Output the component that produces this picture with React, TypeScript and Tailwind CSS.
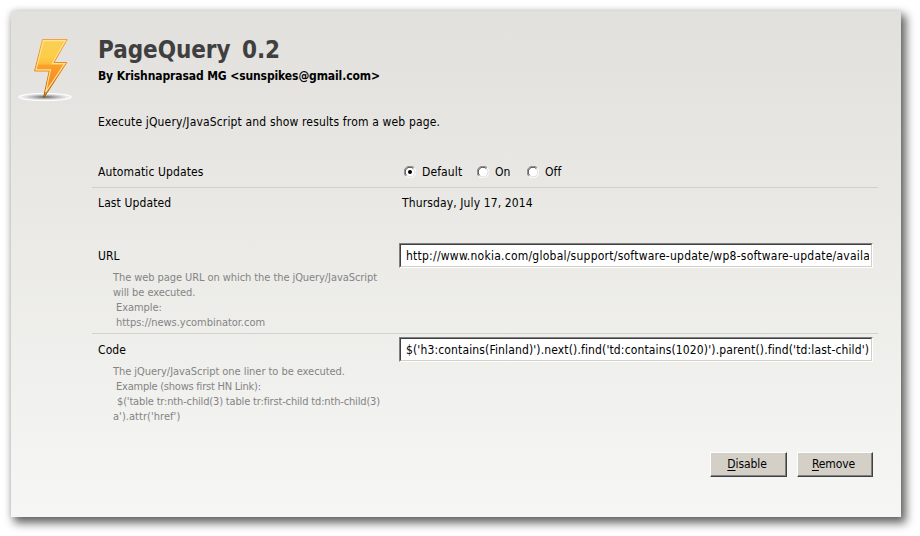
import type { ReactNode } from "react";

function Bolt() {
  return (
    <svg width="58" height="68" viewBox="0 0 58 68" className="block">
      <defs>
        <linearGradient id="bolt" x1="0" y1="0" x2="0" y2="1">
          <stop offset="0" stopColor="#f9cf58" />
          <stop offset="0.3" stopColor="#fdcd48" />
          <stop offset="0.42" stopColor="#fcbc3c" />
          <stop offset="0.44" stopColor="#f9a02c" />
          <stop offset="0.7" stopColor="#f78d25" />
          <stop offset="1" stopColor="#f7a32c" />
        </linearGradient>
        <linearGradient id="edge" x1="0" y1="0" x2="0" y2="1">
          <stop offset="0" stopColor="#f5a138" />
          <stop offset="0.6" stopColor="#e8801c" />
          <stop offset="1" stopColor="#8a5208" />
        </linearGradient>
        <radialGradient id="ground">
          <stop offset="0" stopColor="#606060" />
          <stop offset="0.35" stopColor="#a8a8a8" />
          <stop offset="0.7" stopColor="#dcdcdc" />
          <stop offset="1" stopColor="#fafafa" />
        </radialGradient>
      </defs>
      <ellipse cx="28" cy="62" rx="26.5" ry="3.6" fill="url(#ground)" stroke="#fff" strokeWidth="1" />
      <path d="M25.5 4.5H50.2L37 27.5H49.8L26.5 63L32.2 36H17.6Z" fill="url(#bolt)" stroke="url(#edge)" strokeWidth="1" strokeLinejoin="round" />
      <path d="M26.4 5.6H48.3L35.2 28.6H47.7L28.7 57L33.5 34.9H19Z" fill="none" stroke="#ffe391" strokeWidth="1.1" />
    </svg>
  );
}

function Radio({ label, checked, gap }: { label: string; checked?: boolean; gap: string }) {
  return (
    <label className={`flex items-center gap-[6px] ${gap}`}>
      <svg width="12" height="12" viewBox="0 0 12 12">
        <circle cx="6" cy="6" r="5" fill="#fff" />
        <path d="M1.8 10.2A5.5 5.5 0 0 1 10.2 1.8" fill="none" stroke="#808080" />
        <path d="M2.6 9.3A4.6 4.6 0 0 1 9.3 2.6" fill="none" stroke="#404040" />
        <path d="M10.2 1.8A5.6 5.6 0 0 1 1.8 10.2" fill="none" stroke="#fff" />
        <path d="M9.5 2.8A4.6 4.6 0 0 1 2.8 9.5" fill="none" stroke="#d8d5ce" strokeWidth="0.7" />
        {checked && <circle cx="6" cy="6" r="2" fill="#000" />}
      </svg>
      <span>{label}</span>
    </label>
  );
}

function Field({ children }: { children: ReactNode }) {
  return (
    <div className="h-[25px] w-[474px] border border-t-[#808080] border-r-white border-b-white border-l-[#808080]">
      <div className="h-full overflow-hidden border border-t-[#404040] border-r-[#d4d0c8] border-b-[#d4d0c8] border-l-[#404040] bg-white px-[2px]">
        <div className="overflow-hidden pl-[3px] leading-[22px] whitespace-pre">{children}</div>
      </div>
    </div>
  );
}

function PushButton({ width, children }: { width: string; children: ReactNode }) {
  return (
    <button className={`h-[25px] border border-t-white border-r-[#404040] border-b-[#404040] border-l-white bg-[#d4d0c8] ${width}`}>
      <span className="flex h-full items-center justify-center border-r border-b border-[#808080] pr-0.5">
        <span className="leading-4 tracking-[-0.1px]">{children}</span>
      </span>
    </button>
  );
}

export default function App() {
  return (
    <main className="h-[536px] w-[920px] overflow-hidden bg-white p-[11px] text-xs text-black [font-family:'DejaVu_Sans_Condensed','DejaVu_Sans',sans-serif]">
      <section className="flex h-[506px] w-[890px] bg-[linear-gradient(to_bottom,#e1e0dc,#f6f6f4)] shadow-[4px_5px_9px_1px_rgba(0,0,0,0.6),0_0_7px_rgba(0,0,0,0.12)]">
        <div className="w-[81px] shrink-0 pt-6 pl-1.5">
          <Bolt />
        </div>
        <div className="w-[786px]">
          <header className="pt-[25px] pl-[6px]">
            <h1 className="h-[32px] text-2xl leading-[28px] font-bold tracking-[-0.05px] whitespace-pre text-[#3f3f3f] [word-spacing:4px]">PageQuery 0.2</h1>
            <p className="h-[46px] leading-4 font-bold tracking-[-0.11px]">By Krishnaprasad MG &lt;sunspikes@gmail.com&gt;</p>
            <p className="h-[50px] leading-4 tracking-[0.155px]">Execute jQuery/JavaScript and show results from a web page.</p>
          </header>

          <div className="flex h-6 border-b border-[#d0d0cd] pl-[6px] leading-4 tracking-[0.12px]">
            <span className="w-[306px]">Automatic Updates</span>
            <div className="flex h-4 items-center">
              <Radio label="Default" checked gap="w-[73px]" />
              <Radio label="On" gap="w-[50px]" />
              <Radio label="Off" gap="w-[50px]" />
            </div>
          </div>

          <div className="flex h-[55px] pt-[7px] pl-[6px] leading-4 tracking-[0.12px]">
            <span className="w-[304px]">Last Updated</span>
            <span>Thursday, July 17, 2014</span>
          </div>

          <div className="flex h-[91px] border-b border-[#d0d0cd] pl-[6px]">
            <div className="w-[301px] pt-[5px]">
              <div className="h-[22px] leading-4">URL</div>
              <div className="pl-[15px] text-[11px] leading-[15px] tracking-[-0.075px] whitespace-pre text-[#848484]">
                <p>The web page URL on which the the jQuery/JavaScript</p>
                <p>will be executed.</p>
                <p className="pl-[3px]">Example:</p>
                <p className="pl-[3px] tracking-[-0.03px]">https://news.ycombinator.com</p>
              </div>
            </div>
            <div className="tracking-[0.24px]">
              <Field>http://www.nokia.com/global/support/software-update/wp8-software-update/availa</Field>
            </div>
          </div>

          <div className="flex h-[118px] pt-[3px] pl-[6px]">
            <div className="w-[301px] pt-[5px]">
              <div className="h-[22px] leading-4 tracking-[0.1px]">Code</div>
              <div className="pl-[15px] text-[11px] leading-[15px] tracking-[-0.05px] whitespace-pre text-[#848484]">
                <p>The jQuery/JavaScript one liner to be executed.</p>
                <p className="pl-[3px] tracking-[-0.23px]">Example (shows first HN Link):</p>
                <p className="pl-[4px] tracking-[-0.16px]">$('table tr:nth-child(3) table tr:first-child td:nth-child(3)</p>
                <p className="tracking-[0.05px]">a').attr('href')</p>
              </div>
            </div>
            <div className="tracking-[0.14px]">
              <Field>$('h3:contains(Finland)').next().find('td:contains(1020)').parent().find('td:last-child')</Field>
            </div>
          </div>

          <div className="flex justify-end gap-2.5 pr-[5px]">
            <PushButton width="w-[77px]"><u className="underline-offset-2">D</u>isable</PushButton>
            <PushButton width="w-[76px]"><u className="underline-offset-2">R</u>emove</PushButton>
          </div>
        </div>
      </section>
    </main>
  );
}
